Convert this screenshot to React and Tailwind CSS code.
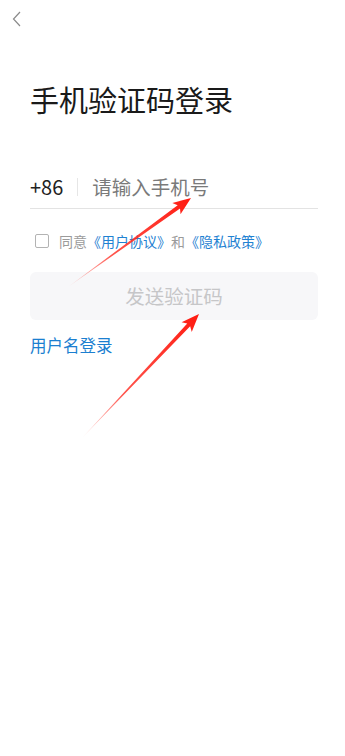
import React from 'react';

const FONT = { fontFamily: '"Noto Sans CJK SC", "Noto Sans", sans-serif' };

// 红色标注箭头（尾部细且淡，头部实心）
const Arrow = ({ from, to, head = 18, spread = 7, shaft = 2, id }) => {
  const dx = to[0] - from[0];
  const dy = to[1] - from[1];
  const len = Math.hypot(dx, dy);
  const ux = dx / len;
  const uy = dy / len;
  const nx = -uy;
  const ny = ux;
  const bx = to[0] - ux * head;
  const by = to[1] - uy * head;
  const nb = 3;
  const pts = [
    [from[0], from[1]],
    [bx + ux * nb + nx * shaft, by + uy * nb + ny * shaft],
    [bx + nx * spread, by + ny * spread],
    [to[0], to[1]],
    [bx - nx * spread, by - ny * spread],
    [bx + ux * nb - nx * shaft, by + uy * nb - ny * shaft],
  ];
  return (
    <>
      <defs>
        <linearGradient id={id} gradientUnits="userSpaceOnUse" x1={from[0]} y1={from[1]} x2={to[0]} y2={to[1]}>
          <stop offset="0" stopColor="#ff3b30" stopOpacity="0.1" />
          <stop offset="0.35" stopColor="#ff2a20" stopOpacity="0.8" />
          <stop offset="1" stopColor="#ff1a10" stopOpacity="1" />
        </linearGradient>
      </defs>
      <polygon points={pts.map(p => p.join(',')).join(' ')} fill={`url(#${id})`} />
    </>
  );
};

export default function App() {
  return (
    <div className="relative w-full h-[756px] bg-white overflow-hidden" style={FONT}>
      {/* Header */}
      <div className="h-[38px] pl-[12px] pt-[11px]">
        <svg width="10" height="16" viewBox="0 0 10 16" fill="none">
          <path d="M8 1 L1.5 8 L8 15" stroke="#8a8a8a" strokeWidth="1.2" />
        </svg>
      </div>

      <div className="pl-[30px] pr-[27px]">
        {/* 标题 */}
        <h1 className="mt-[43px] text-[29px] leading-[36px] text-[#1a1a1a] font-normal">
          手机验证码登录
        </h1>

        {/* 手机号输入 */}
        <div className="mt-[48px] flex items-center h-[44px] border-b border-[#e3e3e3]">
          <span className="text-[20px] text-[#222] leading-none">+86</span>
          <span className="ml-[14px] w-px h-[18px] bg-[#e6e6e6]" />
          <input
            className="ml-[14px] flex-1 min-w-0 outline-none bg-transparent text-[19.5px] text-[#333] placeholder:text-[#7a7a7a]"
            placeholder="请输入手机号"
            style={FONT}
          />
        </div>

        {/* 协议 */}
        <div className="mt-[24px] flex items-center h-[16px] pl-[5px]">
          <span className="w-[14px] h-[14px] border border-[#b3b3b3] rounded-[2px]" />
          <span className="ml-[10px] text-[14px] leading-none text-[#9b9b9b]">
            同意<span className="text-[#1f82d2]">《用户协议》</span>和<span className="text-[#1f82d2]">《隐私政策》</span>
          </span>
        </div>

        {/* 发送验证码 */}
        <button
          type="button"
          className="mt-[23px] w-full h-[48px] rounded-[6px] bg-[#f7f7f9] text-[19.5px] text-[#c6c6c8]"
          style={FONT}
        >
          发送验证码
        </button>

        {/* 用户名登录 */}
        <div className="mt-[14px] text-[16.5px] leading-[22px] text-[#1b7fd0]">用户名登录</div>
      </div>

      {/* 标注箭头 */}
      <svg className="absolute inset-0 pointer-events-none" width="345" height="756">
        <Arrow id="a1" from={[68, 287]} to={[191, 198]} />
        <Arrow id="a2" from={[82, 438]} to={[199, 314]} />
      </svg>
    </div>
  );
}
